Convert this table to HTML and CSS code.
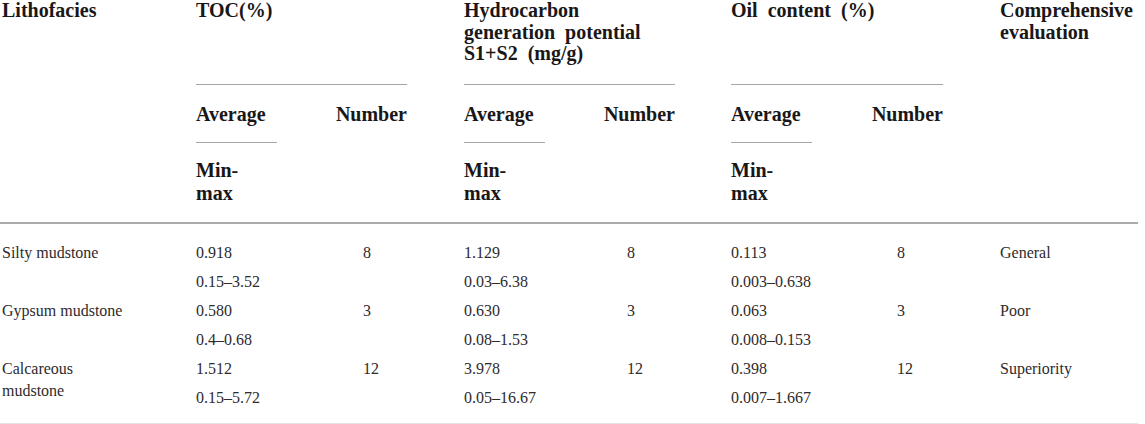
FILE: index.html
```html
<!DOCTYPE html>
<html lang="en">
<head>
<meta charset="utf-8">
<title>Lithofacies evaluation</title>
<link rel="stylesheet" href="styles.css">
</head>
<body>
<div class="tbl">
  <div class="grid thead">
    <div class="lith">Lithofacies</div>
    <div class="grp g1">TOC(%)</div>
    <div class="grp g2"><span class="grp-text">Hydrocarbon generation potential S1+S2 (mg/g)</span></div>
    <div class="grp g3">Oil content (%)</div>
    <div class="comp">Comprehensive evaluation</div>

    <div class="avg c2"><span>Average</span></div>
    <div class="hnum c3">Number</div>
    <div class="avg c5"><span>Average</span></div>
    <div class="hnum c6">Number</div>
    <div class="avg c8"><span>Average</span></div>
    <div class="hnum c9">Number</div>

    <div class="mm c2">Min-max</div>
    <div class="mm c5">Min-max</div>
    <div class="mm c8">Min-max</div>
  </div>

  <div class="grid tbody">
    <div class="td name r1 s2">Silty mudstone</div>
    <div class="td c2 r1">0.918</div>
    <div class="td c2 r2">0.15–3.52</div>
    <div class="td bnum c3 r1 s2">8</div>
    <div class="td c5 r1">1.129</div>
    <div class="td c5 r2">0.03–6.38</div>
    <div class="td bnum c6 r1 s2">8</div>
    <div class="td c8 r1">0.113</div>
    <div class="td c8 r2">0.003–0.638</div>
    <div class="td bnum c9 r1 s2">8</div>
    <div class="td eval r1 s2">General</div>

    <div class="td name r3 s2">Gypsum mudstone</div>
    <div class="td c2 r3">0.580</div>
    <div class="td c2 r4">0.4–0.68</div>
    <div class="td bnum c3 r3 s2">3</div>
    <div class="td c5 r3">0.630</div>
    <div class="td c5 r4">0.08–1.53</div>
    <div class="td bnum c6 r3 s2">3</div>
    <div class="td c8 r3">0.063</div>
    <div class="td c8 r4">0.008–0.153</div>
    <div class="td bnum c9 r3 s2">3</div>
    <div class="td eval r3 s2">Poor</div>

    <div class="td name r5 s2">Calcareous mudstone</div>
    <div class="td c2 r5">1.512</div>
    <div class="td c2 r6">0.15–5.72</div>
    <div class="td bnum c3 r5 s2">12</div>
    <div class="td c5 r5">3.978</div>
    <div class="td c5 r6">0.05–16.67</div>
    <div class="td bnum c6 r5 s2">12</div>
    <div class="td c8 r5">0.398</div>
    <div class="td c8 r6">0.007–1.667</div>
    <div class="td bnum c9 r5 s2">12</div>
    <div class="td eval r5 s2">Superiority</div>
  </div>
</div>
</body>
</html>
```

FILE: styles.css
```css
html, body {
  margin: 0;
  padding: 0;
  background: #ffffff;
}

body {
  font-family: "Liberation Serif", "Times New Roman", serif;
  color: #231f20;
  overflow: hidden;
}

.tbl {
  width: 1138px;
}

.grid {
  display: grid;
  grid-template-columns: 196px 137px 74px 57px 133px 78px 56px 136px 76px 57px 138px;
}

/* header */
.thead {
  font-weight: bold;
  font-size: 20px;
  line-height: 21.5px;
  color: #1a1718;
  border-bottom: 2px solid #ababab;
}

.lith {
  grid-column: 1;
  grid-row: 1 / 4;
  padding-left: 2px;
}

.comp {
  grid-column: 11;
  grid-row: 1 / 4;
}

.grp {
  grid-row: 1;
  padding-bottom: 19.5px;
  border-bottom: 1px solid #a6a6a6;
  word-spacing: 5px;
}

.grp-text {
  display: block;
  max-width: 205px;
}

.g1 { grid-column: 2 / 4; }
.g2 { grid-column: 5 / 7; }
.g3 { grid-column: 8 / 10; }

.avg {
  grid-row: 2;
  padding-top: 18.5px;
}

.avg span {
  display: block;
  width: 81px;
  padding-bottom: 17px;
  border-bottom: 1px solid #a6a6a6;
}

.hnum {
  grid-row: 2;
  padding-top: 18.5px;
  text-align: right;
}

.mm {
  grid-row: 3;
  width: 64px;
  padding: 15.75px 0 17.25px;
  line-height: 23px;
}

.c2 { grid-column: 2; }
.c3 { grid-column: 3; }
.c5 { grid-column: 5; }
.c6 { grid-column: 6; }
.c8 { grid-column: 8; }
.c9 { grid-column: 9; }

/* body */
.tbody {
  font-size: 16px;
  line-height: 22px;
  color: #2e2b2c;
  grid-template-rows: repeat(6, 29px);
  padding: 14.6px 0 10.4px;
  border-bottom: 1px solid #e3e3e3;
}

.td {
  padding-top: 3.5px;
}

.r1 { grid-row-start: 1; }
.r2 { grid-row-start: 2; }
.r3 { grid-row-start: 3; }
.r4 { grid-row-start: 4; }
.r5 { grid-row-start: 5; }
.r6 { grid-row-start: 6; }
.s2 { grid-row-end: span 2; }

.name {
  grid-column: 1;
  padding-left: 2px;
  padding-right: 64px;
}

.bnum {
  padding-left: 30px;
}

.eval {
  grid-column: 11;
}
```
